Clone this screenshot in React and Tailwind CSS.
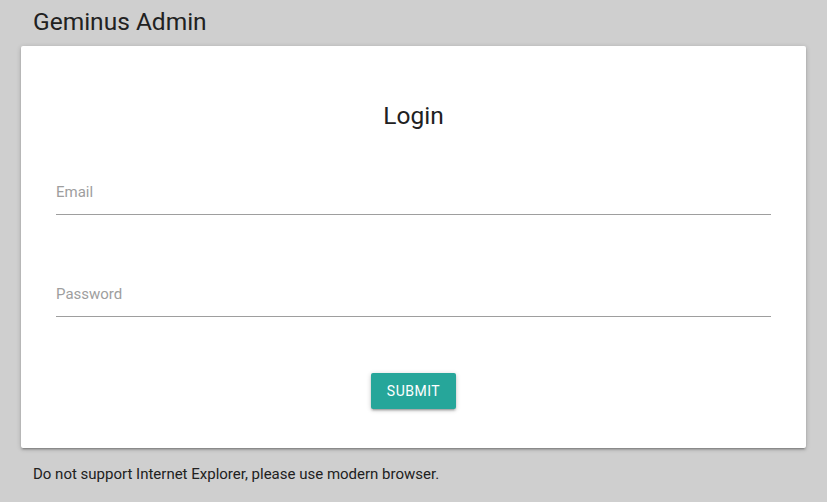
import React from "react";

const Field = ({ label, type }) => (
  <div className="h-[48px] border-b border-[#9e9e9e] flex items-center pt-[3px]">
    <input
      type={type}
      placeholder={label}
      className="w-full bg-transparent outline-none text-[15px] text-[#212121] placeholder:text-[#9e9e9e]"
    />
  </div>
);

const App = () => {
  return (
    <div
      className="min-h-screen bg-[#cfcfcf] text-[#212121]"
      style={{ fontFamily: "Roboto, 'Noto Sans', sans-serif" }}
    >
      <div className="px-[21px] pt-[6px]">
        <h1 className="px-[12px] text-[24.5px] leading-[32px] font-normal">Geminus Admin</h1>
        <div className="mt-[8px] bg-white rounded-[2px] shadow-[0_2px_2px_0_rgba(0,0,0,0.14),0_3px_1px_-2px_rgba(0,0,0,0.12),0_1px_5px_0_rgba(0,0,0,0.2)] px-[35px] pt-[54px] pb-[39px]">
          <h2 className="text-center text-[24.5px] leading-[32px] font-normal">Login</h2>
          <div className="mt-[35px]">
            <Field label="Email" type="email" />
          </div>
          <div className="mt-[54px]">
            <Field label="Password" type="password" />
          </div>
          <div className="mt-[56px] flex justify-center">
            <button
              type="button"
              className="h-[36px] px-[16px] rounded-[2px] bg-[#26a69a] text-white text-[14px] uppercase tracking-[0.5px] shadow-[0_2px_2px_0_rgba(0,0,0,0.14),0_3px_1px_-2px_rgba(0,0,0,0.12),0_1px_5px_0_rgba(0,0,0,0.2)]"
            >
              Submit
            </button>
          </div>
        </div>
        <p className="mt-[16px] px-[12px] text-[15px] leading-[20px]">
          Do not support Internet Explorer, please use modern browser.
        </p>
      </div>
    </div>
  );
};

export default App;
